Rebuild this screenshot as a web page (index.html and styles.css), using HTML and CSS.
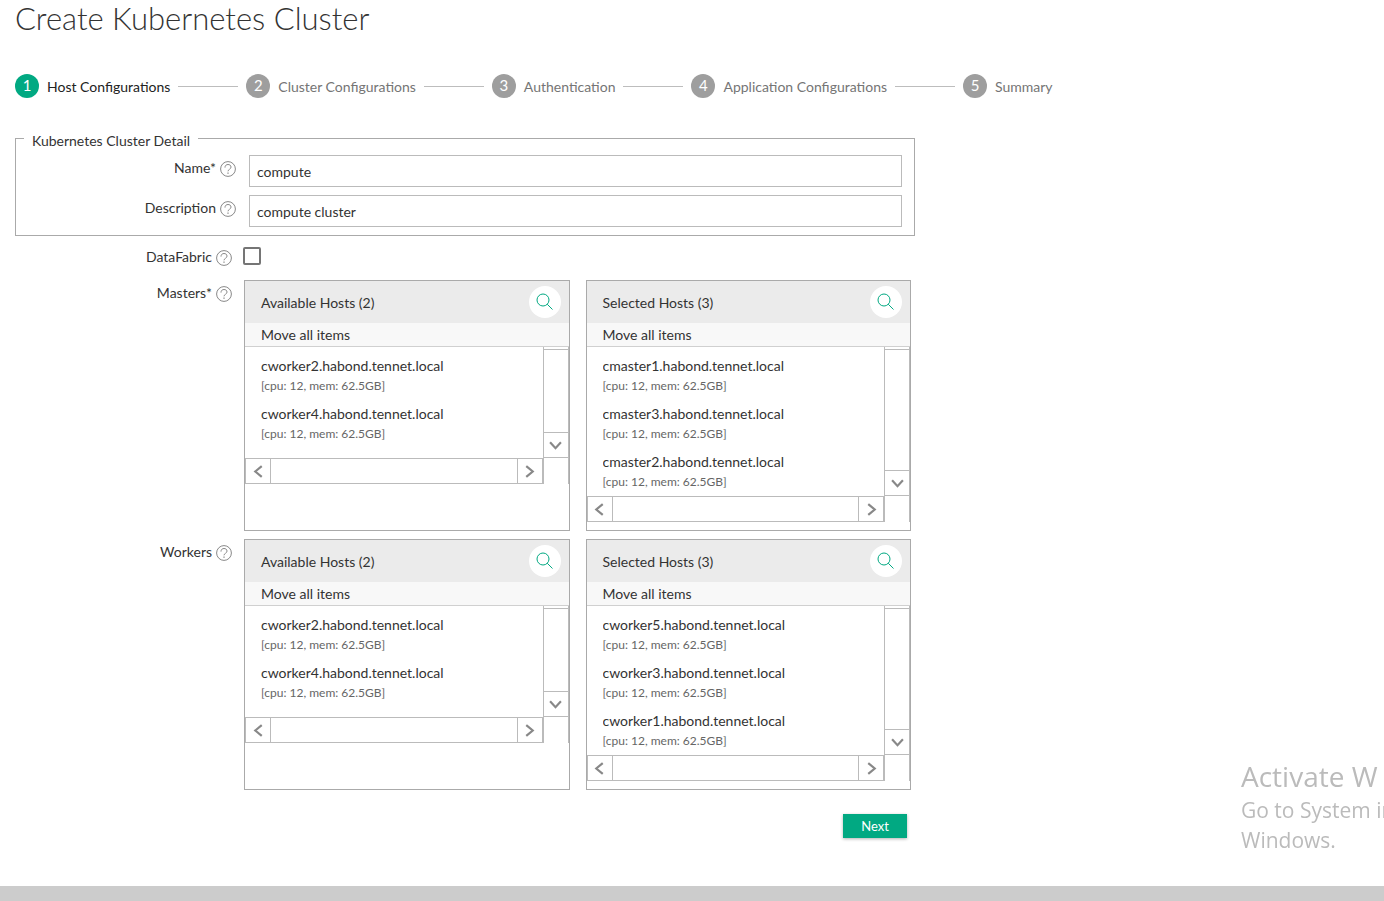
FILE: index.html
```
<!DOCTYPE html>
<html lang="en">
<head>
<meta charset="utf-8">
<title>Create Kubernetes Cluster</title>
<link rel="stylesheet" href="styles.css">
</head>
<body>
<svg class="sprite" aria-hidden="true">
  <symbol id="help" viewBox="0 0 16 16"><circle cx="8" cy="8" r="7.4"/><path d="M5 6.6C5 4.6 6.2 3.5 8 3.5s3 1 3 2.6c0 2.2-3 2.2-3 4.2M8 11.4v1.6"/></symbol>
  <symbol id="search" viewBox="0 0 18 18"><circle cx="7" cy="7" r="6"/><path d="M11.2 11.2L16.5 16.5"/></symbol>
  <symbol id="left" viewBox="0 0 12 12"><path d="M9 1L3 6l6 5"/></symbol>
  <symbol id="right" viewBox="0 0 12 12"><path d="M3 1l6 5-6 5"/></symbol>
  <symbol id="down" viewBox="0 0 12 12"><path d="M1 3l5 5.500 5-5.500"/></symbol>
</svg>
<main class="page">
  <h1 class="title">Create Kubernetes Cluster</h1>
  <ol class="steps">
    <li class="step step-active"><span class="step-number">1</span><span class="step-name">Host Configurations</span></li>
    <li class="step"><span class="step-number">2</span><span class="step-name">Cluster Configurations</span></li>
    <li class="step"><span class="step-number">3</span><span class="step-name">Authentication</span></li>
    <li class="step"><span class="step-number">4</span><span class="step-name">Application Configurations</span></li>
    <li class="step"><span class="step-number">5</span><span class="step-name">Summary</span></li>
  </ol>
  <form class="form">
    <fieldset class="detail">
      <legend class="legend">Kubernetes Cluster Detail</legend>
      <div class="field">
        <label class="label" for="name">Name*<svg class="help"><use href="#help"/></svg></label>
        <input class="input" id="name" type="text" value="compute">
      </div>
      <div class="field">
        <label class="label" for="description">Description<svg class="help"><use href="#help"/></svg></label>
        <input class="input" id="description" type="text" value="compute cluster">
      </div>
    </fieldset>
    <div class="row row-check">
      <label class="label" for="datafabric">DataFabric<svg class="help"><use href="#help"/></svg></label>
      <input class="check" id="datafabric" type="checkbox">
    </div>
    <div class="row">
      <div class="label" id="masters">Masters*<svg class="help"><use href="#help"/></svg></div>
      <div class="panels" role="group" aria-labelledby="masters">
        <section class="panel">
          <header class="panel-head"><h2 class="panel-title">Available Hosts (2)</h2><button class="search" type="button" aria-label="Search"><svg class="search-icon"><use href="#search"/></svg></button></header>
          <button class="move" type="button">Move all items</button>
          <div class="viewport">
            <ul class="hosts">
              <li class="host">cworker2.habond.tennet.local<small class="spec">[cpu: 12, mem: 62.5GB]</small></li>
              <li class="host">cworker4.habond.tennet.local<small class="spec">[cpu: 12, mem: 62.5GB]</small></li>
            </ul>
            <div class="vbar"><span class="vtrack"></span><button class="arrow" type="button" aria-label="Scroll down"><svg class="chevron"><use href="#down"/></svg></button></div>
            <div class="hbar"><button class="arrow" type="button" aria-label="Scroll left"><svg class="chevron"><use href="#left"/></svg></button><span class="htrack"></span><button class="arrow" type="button" aria-label="Scroll right"><svg class="chevron"><use href="#right"/></svg></button></div>
            <div class="corner"></div>
          </div>
        </section>
        <section class="panel">
          <header class="panel-head"><h2 class="panel-title">Selected Hosts (3)</h2><button class="search" type="button" aria-label="Search"><svg class="search-icon"><use href="#search"/></svg></button></header>
          <button class="move" type="button">Move all items</button>
          <div class="viewport">
            <ul class="hosts">
              <li class="host">cmaster1.habond.tennet.local<small class="spec">[cpu: 12, mem: 62.5GB]</small></li>
              <li class="host">cmaster3.habond.tennet.local<small class="spec">[cpu: 12, mem: 62.5GB]</small></li>
              <li class="host">cmaster2.habond.tennet.local<small class="spec">[cpu: 12, mem: 62.5GB]</small></li>
            </ul>
            <div class="vbar"><span class="vtrack"></span><button class="arrow" type="button" aria-label="Scroll down"><svg class="chevron"><use href="#down"/></svg></button></div>
            <div class="hbar"><button class="arrow" type="button" aria-label="Scroll left"><svg class="chevron"><use href="#left"/></svg></button><span class="htrack"></span><button class="arrow" type="button" aria-label="Scroll right"><svg class="chevron"><use href="#right"/></svg></button></div>
            <div class="corner"></div>
          </div>
        </section>
      </div>
    </div>
    <div class="row">
      <div class="label" id="workers">Workers<svg class="help"><use href="#help"/></svg></div>
      <div class="panels" role="group" aria-labelledby="workers">
        <section class="panel">
          <header class="panel-head"><h2 class="panel-title">Available Hosts (2)</h2><button class="search" type="button" aria-label="Search"><svg class="search-icon"><use href="#search"/></svg></button></header>
          <button class="move" type="button">Move all items</button>
          <div class="viewport">
            <ul class="hosts">
              <li class="host">cworker2.habond.tennet.local<small class="spec">[cpu: 12, mem: 62.5GB]</small></li>
              <li class="host">cworker4.habond.tennet.local<small class="spec">[cpu: 12, mem: 62.5GB]</small></li>
            </ul>
            <div class="vbar"><span class="vtrack"></span><button class="arrow" type="button" aria-label="Scroll down"><svg class="chevron"><use href="#down"/></svg></button></div>
            <div class="hbar"><button class="arrow" type="button" aria-label="Scroll left"><svg class="chevron"><use href="#left"/></svg></button><span class="htrack"></span><button class="arrow" type="button" aria-label="Scroll right"><svg class="chevron"><use href="#right"/></svg></button></div>
            <div class="corner"></div>
          </div>
        </section>
        <section class="panel">
          <header class="panel-head"><h2 class="panel-title">Selected Hosts (3)</h2><button class="search" type="button" aria-label="Search"><svg class="search-icon"><use href="#search"/></svg></button></header>
          <button class="move" type="button">Move all items</button>
          <div class="viewport">
            <ul class="hosts">
              <li class="host">cworker5.habond.tennet.local<small class="spec">[cpu: 12, mem: 62.5GB]</small></li>
              <li class="host">cworker3.habond.tennet.local<small class="spec">[cpu: 12, mem: 62.5GB]</small></li>
              <li class="host">cworker1.habond.tennet.local<small class="spec">[cpu: 12, mem: 62.5GB]</small></li>
            </ul>
            <div class="vbar"><span class="vtrack"></span><button class="arrow" type="button" aria-label="Scroll down"><svg class="chevron"><use href="#down"/></svg></button></div>
            <div class="hbar"><button class="arrow" type="button" aria-label="Scroll left"><svg class="chevron"><use href="#left"/></svg></button><span class="htrack"></span><button class="arrow" type="button" aria-label="Scroll right"><svg class="chevron"><use href="#right"/></svg></button></div>
            <div class="corner"></div>
          </div>
        </section>
      </div>
    </div>
    <div class="actions"><button class="next" type="button">Next</button></div>
  </form>
</main>
<footer class="footer"></footer>
<aside class="watermark">
  <p class="watermark-title">Activate W</p>
  <p class="watermark-text">Go to System in<br>Windows.</p>
</aside>
</body>
</html>
```
FILE: styles.css
```
* { box-sizing: border-box; }
body {
  margin: 0;
  min-height: 100vh;
  display: flex;
  flex-direction: column;
  overflow: hidden;
  background: #fff;
  color: #333;
  font: 14px/18px Lato, "Open Sans", sans-serif;
}
button, input { font: inherit; color: inherit; }
button { cursor: pointer; }
svg { fill: none; }
.sprite { position: absolute; width: 0; height: 0; }
.page { flex: 1; padding: 0 15px; }
.title {
  margin: 0;
  font-size: 31px;
  line-height: 36px;
  font-weight: 300;
}
.steps {
  display: flex;
  align-items: center;
  gap: 8px;
  margin: 38px 0 0;
  padding: 0;
  list-style: none;
}
.step { display: flex; align-items: center; gap: 8px; color: #757575; white-space: nowrap; }
.step:not(:last-child)::after { content: ""; width: 60px; height: 1px; background: #bdbdbd; }
.step-active { color: #222; }
.step-number {
  width: 24px;
  height: 24px;
  border-radius: 50%;
  background: #9e9e9e;
  color: #fff;
  font-size: 15px;
  line-height: 23px;
  text-align: center;
}
.step-active .step-number { background: #01a982; }
.step-name { padding-top: 2px; }
.form { max-width: 900px; margin-top: 28px; }
.detail {
  display: flex;
  flex-direction: column;
  gap: 8px;
  min-width: 0;
  margin: 0;
  padding: 5px 12px 8px 8px;
  border: 1px solid #aaa;
}
.legend { padding: 6px 8px 0; }
.field { display: grid; grid-template-columns: 212px 1fr; column-gap: 13px; }
.label { display: flex; justify-content: flex-end; align-items: center; gap: 4px; height: 26px; }
.help { width: 16px; height: 16px; margin-top: 2px; stroke: #888; }
.input {
  width: 100%;
  height: 32px;
  padding: 0 7px;
  border: 1px solid #bbb;
  border-radius: 0;
  background: #fff;
}
.row {
  display: grid;
  grid-template-columns: 217px minmax(0, 1fr);
  column-gap: 12px;
  margin-top: 8px;
  padding-right: 4px;
}
.row-check { height: 28px; column-gap: 11px; }
.check {
  appearance: none;
  width: 18px;
  height: 18px;
  margin: 3px 0 0;
  border: 2px solid #757575;
  border-radius: 2px;
  background: #fff;
}
.panels { display: grid; grid-template-columns: 1fr 1fr; gap: 16px; }
.panel { min-height: 251px; border: 1px solid #aaa; }
.panel-head {
  display: flex;
  justify-content: space-between;
  align-items: center;
  height: 42px;
  padding: 0 8px 0 16px;
  background: #ebebeb;
}
.panel-title { margin: 0; padding-top: 1px; font-size: 14px; line-height: 18px; font-weight: 400; }
.search {
  display: grid;
  place-items: center;
  width: 32px;
  height: 32px;
  padding: 0;
  border: 0;
  border-radius: 50%;
  background: #fff;
}
.search-icon { width: 18px; height: 18px; stroke: #01a982; }
.move {
  display: block;
  width: 100%;
  height: 24px;
  padding: 0 16px;
  border: 0;
  border-bottom: 1px solid #d0d0d0;
  background: #f8f8f8;
  text-align: left;
}
.viewport { display: grid; grid-template-columns: minmax(0, 1fr) 26px; grid-template-rows: auto 26px; }
.hosts { min-height: 111px; margin: 0; padding: 5px 16px 0; list-style: none; }
.host { height: 48px; padding-top: 5px; overflow: hidden; white-space: nowrap; }
.spec { display: block; padding-top: 2px; color: #666; font-size: 12px; }
.vbar { display: flex; flex-direction: column; padding-top: 2px; border: solid #bbb; border-width: 0 1px 1px; }
.vtrack { flex: 1; border-top: 1px solid #bbb; }
.arrow { display: grid; place-items: center; width: 24px; height: 24px; padding: 0; border: 0; background: #fff; }
.vbar .arrow { height: 25px; border-top: 1px solid #bbb; }
.chevron { width: 13px; height: 13px; stroke: #888; stroke-width: 2; }
.hbar { display: flex; border: 1px solid #bbb; }
.htrack { flex: 1; border: solid #bbb; border-width: 0 1px; }
.corner { border: solid #bbb; border-width: 0 1px; }
.actions { display: flex; justify-content: flex-end; padding: 24px 8px 48px; }
.next {
  width: 64px;
  height: 24px;
  padding: 0;
  border: 0;
  background: #01a982;
  color: #fff;
  font-size: 13px;
  box-shadow: 0 1px 3px rgba(0, 0, 0, .3);
}
.footer { height: 15px; background: #ccc; }
.watermark {
  position: fixed;
  right: 0;
  bottom: 46px;
  width: 143px;
  overflow: hidden;
  color: #bbb;
  font-family: "Open Sans", "Noto Sans", sans-serif;
  white-space: nowrap;
}
.watermark-title { margin: 0; font-size: 28px; line-height: 38px; }
.watermark-text { margin: 0; font-size: 21px; line-height: 30px; }
```
